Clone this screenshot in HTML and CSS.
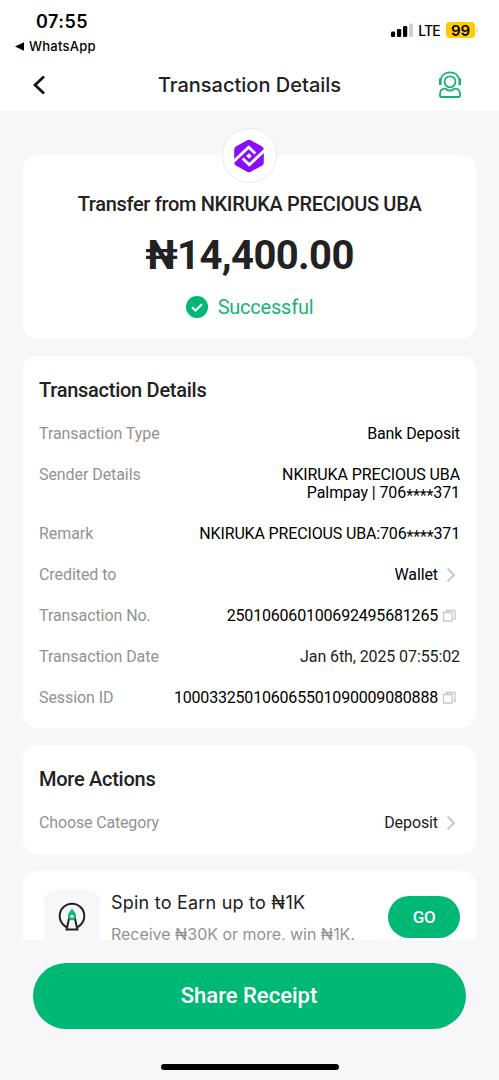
FILE: index.html
```
<!DOCTYPE html>
<html lang="en">
<head>
<meta charset="utf-8">
<title>Transaction Details</title>
<link rel="stylesheet" href="styles.css">
</head>
<body>
<div class="screen">
  <header class="top">
    <div class="status">
      <div class="status-left">
        <div class="time">07:55</div>
        <div class="back-app"><svg width="9" height="9" viewBox="0 0 9 9"><path d="M0 4.500 9 .3v8.400z"/></svg><span>WhatsApp</span></div>
      </div>
      <div class="status-right">
        <svg class="signal" width="24" height="16" viewBox="0 0 24 16"><rect x="1" y="9.500" width="4.200" height="5.500" rx="1.200"/><rect x="7" y="7" width="4.200" height="8" rx="1.200"/><rect x="13" y="4" width="4.200" height="11" rx="1.200"/><rect x="19" y="1.500" width="4" height="13.500" rx="1.200" fill="#cfcfcf"/></svg>
        <span class="lte">LTE</span>
        <span class="battery">99</span>
        <span class="nub"></span>
      </div>
    </div>
    <div class="nav">
      <svg class="nav-back" width="14" height="22" viewBox="0 0 14 22"><path d="M12 2.500 3 11l9 8.500" fill="none" stroke="#111" stroke-width="2.700"/></svg>
      <h1>Transaction Details</h1>
      <svg class="support" width="24" height="28" viewBox="0 0 24 28" fill="none" stroke="#16b377" stroke-width="1.800"><circle cx="12" cy="10.800" r="5.500"/><path d="M2.800 8.500C3.600 4.200 7.300 1.400 12 1.400s8.400 2.800 9.200 7.100"/><path d="M2.300 7.500v6.500M21.700 7.500v6.500" stroke-width="2.600"/><path d="M6.800 17.600C3.400 17.600 1.900 20 1.900 24.300q0 1.700 1.700 1.700h16.800q1.700 0 1.700-1.700c0-4.300-1.500-6.700-4.900-6.700q-1 0-1.800.9c-1.600 1.400-5.200 1.400-6.800 0q-.8-.9-1.800-.9z"/></svg>
    </div>
  </header>

  <main class="content">
    <section class="card summary">
      <div class="logo"><svg width="32" height="34" viewBox="0 0 32 34"><path d="M14.200 1.300q1.800-1 3.600 0l11 6q2 1.100 2 3.300v12.800q0 2.200-2 3.300l-11 6q-1.800 1-3.600 0l-11-6q-2-1.100-2-3.300V10.600q0-2.200 2-3.300z" fill="#8b0cf8"/><path d="M0 23 15.700 8.300l6.600 6.200M32 11 16.300 25.700l-6.600-6.200" fill="none" stroke="#fff" stroke-width="2.900"/><path d="m16 14.200 2.800 2.800-2.800 2.800-2.800-2.800z" fill="#fff"/></svg></div>
      <div class="from"><span>Transfer from NKIRUKA PRECIOUS UBA</span></div>
      <div class="amount"><span>₦14,400.00</span></div>
      <div class="state"><svg width="22" height="22" viewBox="0 0 22 22"><circle cx="11" cy="11" r="11" fill="#00b875"/><path d="m6 11.200 3.500 3.300 6.500-6.300" fill="none" stroke="#fff" stroke-width="2"/></svg><span>Successful</span></div>
    </section>

    <section class="card details">
      <h2>Transaction Details</h2>
      <div class="row"><span class="label">Transaction Type</span><span class="value">Bank Deposit</span></div>
      <div class="row"><span class="label">Sender Details</span><span class="value">NKIRUKA PRECIOUS UBA<br>Palmpay | 706<span class="mask">****</span>371</span></div>
      <div class="row"><span class="label">Remark</span><span class="value remark">NKIRUKA PRECIOUS UBA:706<span class="mask">****</span>371</span></div>
      <div class="row"><span class="label">Credited to</span><span class="value">Wallet</span><svg class="chevron" width="22" height="18" viewBox="0 0 22 18"><path d="m9.500 2.500 6.500 6.500-6.500 6.500"/></svg></div>
      <div class="row"><span class="label">Transaction No.</span><span class="value number">250106060100692495681265</span><svg class="copy" width="22" height="18" viewBox="0 0 22 18"><path d="M8.500 5V3.500h8.500v8.500h-2M5.500 5.500H14V14H5.500z"/></svg></div>
      <div class="row"><span class="label">Transaction Date</span><span class="value date">Jan 6th, 2025 07:55:02</span></div>
      <div class="row"><span class="label">Session ID</span><span class="value number">100033250106065501090009080888</span><svg class="copy" width="22" height="18" viewBox="0 0 22 18"><path d="M8.500 5V3.500h8.500v8.500h-2M5.500 5.500H14V14H5.500z"/></svg></div>
    </section>

    <section class="card actions">
      <h2>More Actions</h2>
      <div class="row"><span class="label category">Choose Category</span><span class="value date">Deposit</span><svg class="chevron" width="22" height="18" viewBox="0 0 22 18"><path d="m9.500 2.500 6.500 6.500-6.500 6.500"/></svg></div>
    </section>

    <section class="card promo">
      <div class="promo-icon"><svg width="30" height="32" viewBox="0 0 30 32"><circle cx="15" cy="15" r="12.300" fill="none" stroke="#222" stroke-width="2"/><path d="M12.200 17h5.600l2.600 11.500H9.600z" fill="#f7f7f9" stroke="#222" stroke-width="2"/><path d="M15 7.500c2 2.500 4.200 5 4.200 7.500a4.200 4.200 0 0 1-8.400 0C10.800 12.500 13 10 15 7.500z" fill="#18b877"/><circle cx="15" cy="15.200" r="1.500" fill="#fff"/></svg></div>
      <div class="promo-text"><div class="promo-title">Spin to Earn up to ₦1K</div><div class="promo-sub">Receive ₦30K or more, win ₦1K.</div></div>
      <div class="go">GO</div>
    </section>
  </main>

  <footer class="bottom">
    <div class="share">Share Receipt</div>
    <div class="home"></div>
  </footer>
</div>
</body>
</html>
```
FILE: styles.css
```
* { box-sizing: border-box; }
body { margin: 0; background: #f7f7f9; font-family: Roboto, sans-serif; color: #222; }
svg { display: block; flex: none; }
h1, h2 { margin: 0; font-weight: 500; }
.screen { width: 499px; height: 1080px; display: flex; flex-direction: column; overflow: hidden; }
.top { height: 111px; flex: none; background: #fff; font-family: Inter, sans-serif; }
.status { height: 58px; display: flex; justify-content: space-between; color: #000; }
.status-left { padding: 11px 0 0 15px; }
.time { font-size: 18px; font-weight: 600; line-height: 22px; padding-left: 21px; letter-spacing: .5px; }
.back-app { display: flex; align-items: center; gap: 5px; font-size: 13px; font-weight: 500; line-height: 16px; padding-top: 5px; letter-spacing: .25px; }
.status-right { display: flex; align-items: center; height: 16px; margin: 22px 21px 0 0; }
.lte { font-size: 14px; font-weight: 500; margin-left: 4px; letter-spacing: -.8px; }
.battery { width: 29px; height: 16px; margin-left: 6px; border-radius: 4px; background: #fc0; font-size: 15px; font-weight: 600; line-height: 17px; text-align: center; }
.nub { width: 2px; height: 5px; margin-left: 1px; border-radius: 0 2px 2px 0; background: #ddd; }
.nav { height: 53px; display: flex; align-items: center; justify-content: space-between; padding: 0 37px 0 32px; }
h1 { font-size: 20px; line-height: 24px; padding-left: 15px; }
.content { height: 829px; padding: 44px 23px 0; flex: none; overflow: hidden; display: flex; flex-direction: column; gap: 17px; }
.card { background: #fff; border-radius: 14px; flex: none; padding: 0 16px; }
.summary { height: 184px; display: flex; flex-direction: column; align-items: center; }
.logo { width: 55px; height: 55px; margin-top: -27px; padding-right: 2px; border-radius: 50%; border: 1px solid #e9e9ef; background: #fff; display: flex; align-items: center; justify-content: center; }
.from { margin-top: 8px; font-size: 20px; line-height: 26px; font-weight: 500; white-space: nowrap; letter-spacing: -.33px; }
.amount { margin-top: 15px; font-size: 40px; line-height: 48px; font-weight: 700; letter-spacing: -.6px; }
.state { margin-top: 15px; display: flex; gap: 10px; align-items: center; color: #19b477; font-size: 20px; line-height: 24px; letter-spacing: -.22px; }
.details { height: 372px; padding-top: 22px; }
h2 { font-size: 20px; line-height: 24px; margin-bottom: 23px; letter-spacing: -.27px; }
.row { display: flex; margin-bottom: 23px; font-size: 16px; line-height: 18px; }
.label { color: #929292; letter-spacing: -.07px; }
.category { letter-spacing: -.15px; }
.value { margin-left: auto; text-align: right; color: #000; white-space: nowrap; letter-spacing: -.1px; }
.remark { letter-spacing: -.15px; }
.number { letter-spacing: -.19px; }
.mask { line-height: 0; vertical-align: -2.5px; }
.date { color: #222; }
.chevron path { fill: none; stroke: #c8c8c8; stroke-width: 2; }
.copy path { fill: none; stroke: #c6c6c6; stroke-width: 1.300; }
.actions { height: 109px; padding-top: 22px; }
.promo { height: 92px; display: flex; padding: 18px 16px 0 21px; font-family: Inter, sans-serif; }
.promo-icon { width: 56px; height: 56px; border-radius: 14px; background: #f7f7f9; display: flex; align-items: center; justify-content: center; }
.promo-text { margin-left: 11px; white-space: nowrap; }
.promo-title { margin-top: 1px; font-size: 18px; line-height: 26px; letter-spacing: .22px; }
.promo-sub { margin-top: 6px; font-size: 16px; line-height: 24px; color: #929292; letter-spacing: -.03px; }
.go { width: 72px; height: 42px; margin: 7px 0 0 auto; border-radius: 21px; background: #00b875; color: #fff; text-align: center; font: 500 17px/42px Roboto, sans-serif; letter-spacing: -.4px; }
.bottom { flex: 1; padding: 23px 33px 0; display: flex; flex-direction: column; align-items: center; }
.share { width: 433px; height: 66px; border-radius: 33px; background: #00b875; color: #fff; font-size: 22px; font-weight: 500; line-height: 66px; text-align: center; padding-right: 1px; }
.home { width: 178px; height: 6px; margin-top: 35px; border-radius: 3px; background: #000; }
```
